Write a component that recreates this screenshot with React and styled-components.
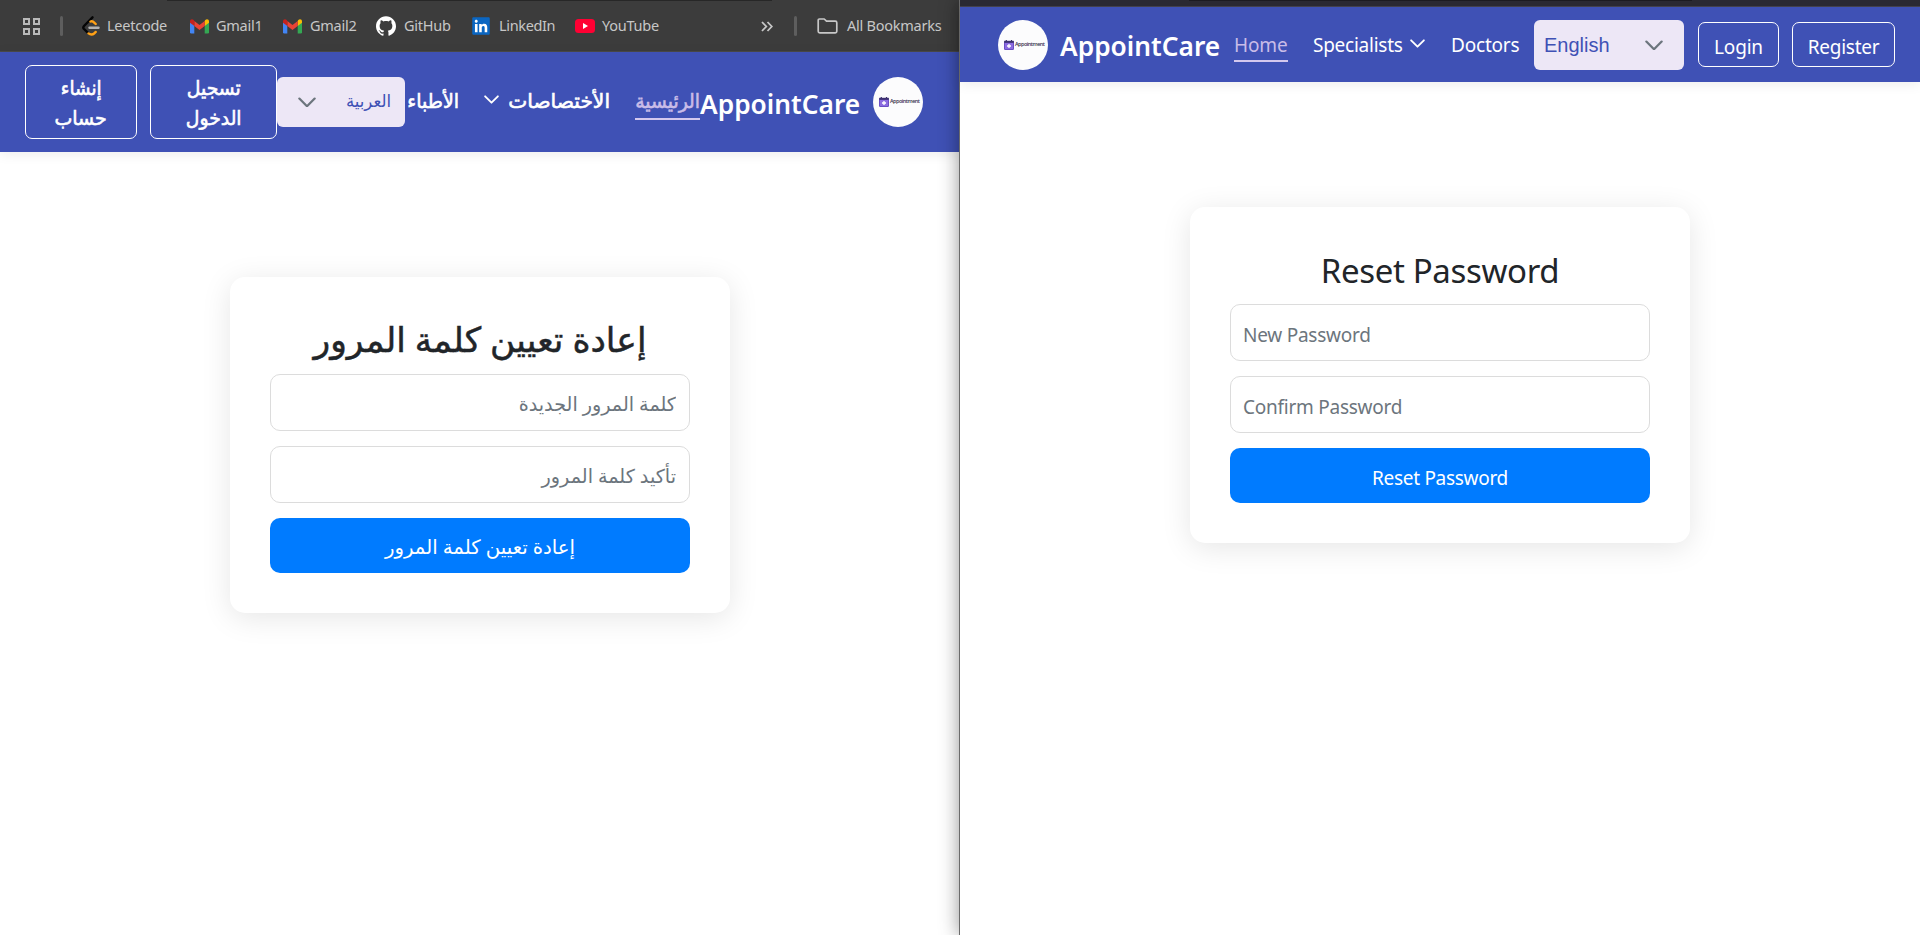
import React from 'react';
import styled, { createGlobalStyle } from 'styled-components';
import { SiGithub } from 'react-icons/si';
import { FaLinkedin } from 'react-icons/fa';

const ui = '"Noto Sans", "DejaVu Sans", sans-serif';

const Global = createGlobalStyle`
  *, *::before, *::after { box-sizing: border-box; }
  body { margin: 0; background: #fff; overflow: hidden; }
  button, input { font: inherit; margin: 0; }
  h1, p { margin: 0; }
`;

const Desktop = styled.div`
  display: flex;
  width: 1920px;
  height: 935px;
  font-family: ${ui};
  color: #212529;
  line-height: 1.5;
`;

const Pane = styled.section`
  display: flex;
  flex-direction: column;
  width: ${(p) => (p.$front ? 961 : 959)}px;
  height: 935px;
  background: #fff;
  flex: none;
  ${(p) => p.$front && 'box-shadow: 0 0 18px rgba(0,0,0,.42); border-left: 1px solid #6b6b6b; z-index: 1;'}
`;

const Bookmarks = styled.div`
  display: flex;
  align-items: center;
  height: 52px;
  padding: 1px 17px 0 22px;
  background: linear-gradient(#272727, #272727) 167px 0 / 605px 1px no-repeat #3c3c3c;
  border-bottom: 1px solid #4a4a4a;
  color: #c7c7c7;
  font-size: 14.5px;
`;

const Bookmark = styled.div`
  display: flex;
  align-items: center;
  gap: ${(p) => p.$gap || 8}px;
  margin-right: ${(p) => p.$after || 0}px;
  svg { flex: none; }
`;

const Label = styled.span`
  display: block;
  width: ${(p) => p.$w}px;
  white-space: nowrap;
  letter-spacing: ${(p) => p.$ls ?? -0.25}px;
`;

const Separator = styled.span`
  width: 3px;
  height: 20px;
  border-radius: 2px;
  background: #5e5e5e;
  margin: 0 ${(p) => p.$after}px 0 ${(p) => p.$before}px;
`;

const Spacer = styled.span`flex: 1;`;

const LinkedInTile = styled.span`
  display: flex;
  background: linear-gradient(#fff, #fff) center / 14px 14px no-repeat;
`;

const TopEdge = styled.div`
  height: 7px;
  flex: none;
  background: linear-gradient(#1d1c22, #1d1c22) 229px 0 / 503px 1px no-repeat #2b2a33;
  border-bottom: 1px solid #45434f;
`;

const Nav = styled.nav`
  display: flex;
  align-items: ${(p) => (p.$rtl ? 'center' : 'flex-start')};
  flex: none;
  height: ${(p) => (p.$rtl ? 100 : 75)}px;
  padding: ${(p) => (p.$rtl ? '0 36px 0 25px' : '13px 25px 0 38px')};
  background: #3f51b5;
  color: #fff;
  box-shadow: 0 2px 12px rgba(0, 0, 0, .08);
  font-size: 19px;
`;

const Logo = styled.div`
  width: 50px;
  height: 50px;
  border-radius: 50%;
  background: #fcfcfd;
  display: flex;
  align-items: center;
  padding-left: 6px;
  gap: 1px;
  flex: none;
  color: #34324c;
  font: 600 5.4px/1 "Open Sans", sans-serif;
`;

const Brand = styled.div`
  flex: none;
  font-size: 26.3px;
  font-weight: 600;
  line-height: 40px;
  width: 160px;
  white-space: nowrap;
  margin: ${(p) => p.$m};
`;

const NavLink = styled.a`
  display: flex;
  align-items: center;
  gap: ${(p) => p.$gap || 8}px;
  flex: none;
  height: 36px;
  width: ${(p) => p.$w}px;
  margin: ${(p) => p.$m};
  padding-top: ${(p) => p.$pt || 0}px;
  white-space: nowrap;
  letter-spacing: ${(p) => p.$ls || 0}px;
  color: ${(p) => (p.$active ? '#c9bce8' : '#fff')};
  border-bottom: 2px solid ${(p) => (p.$active ? '#d4c8ee' : 'transparent')};
  svg { flex: none; margin-bottom: 3px; }
`;

const ArabicText = styled.span`
  display: block;
  flex: none;
  width: ${(p) => p.$w}px;
  white-space: nowrap;
  font-size: ${(p) => p.$size || 20}px;
  transform: scaleX(${(p) => p.$x || 1});
  transform-origin: ${(p) => (p.$center ? 'center' : 'right')};
  -webkit-text-stroke: ${(p) => p.$stroke ?? 0.6}px currentColor;
`;

const Select = styled.div`
  display: flex;
  align-items: center;
  justify-content: space-between;
  flex: none;
  width: ${(p) => p.$w}px;
  height: 50px;
  padding: ${(p) => p.$pad};
  border-radius: 6px;
  background: #ede7f6;
  color: #3f51b5;
  font-family: "Liberation Sans", "DejaVu Sans", sans-serif;
  font-size: 20px;
  margin: ${(p) => p.$m};
`;

const OutlineButton = styled.button`
  display: flex;
  flex-direction: column;
  align-items: center;
  justify-content: center;
  flex: none;
  width: ${(p) => p.$w}px;
  height: ${(p) => p.$h || 45}px;
  padding: ${(p) => p.$pad || '4px 0 0'};
  border: 1px solid #fff;
  border-radius: 7px;
  background: transparent;
  color: #fff;
  line-height: 30px;
  letter-spacing: ${(p) => p.$ls || 0}px;
  margin: ${(p) => p.$m};
`;

const Card = styled.form`
  display: flex;
  flex-direction: column;
  flex: none;
  width: 500px;
  height: 336px;
  margin: 125px 0 0 230px;
  padding: 39px 40px 0;
  border-radius: 15px;
  background: #fff;
  box-shadow: 0 5px 30px rgba(0, 0, 0, .1);
`;

const Title = styled.h1`
  height: 58px;
  line-height: ${(p) => p.$lh || 48}px;
  text-align: center;
  font-size: ${(p) => p.$size}px;
  font-weight: 400;
  letter-spacing: ${(p) => p.$ls || 0}px;
  -webkit-text-stroke: ${(p) => p.$stroke || 0}px currentColor;
`;

const Field = styled.input`
  height: 57px;
  width: 420px;
  margin-bottom: 15px;
  padding: ${(p) => p.$pad || '2px 13px 0'};
  border: 1px solid #dcdcdc;
  border-radius: 10px;
  font-size: ${(p) => p.$size}px;
  letter-spacing: ${(p) => p.$ls || 0}px;
  background: #fff;
  &::placeholder { color: #6c757d; opacity: 1; }
`;

const Submit = styled.button`
  height: 55px;
  border: 0;
  border-radius: 10px;
  background: #007bff;
  color: #fff;
  font-size: ${(p) => p.$size}px;
  letter-spacing: ${(p) => p.$ls || 0}px;
  padding: ${(p) => p.$pad || '2px 0 0'};
`;

const Chevron = ({ w = 15, color = '#fff', sw = 2 }) => (
  <svg width={w} height={w * 0.6} viewBox="0 0 16 9.6" fill="none" stroke={color} strokeWidth={sw} strokeLinecap="round" strokeLinejoin="round">
    <path d="M1.2 1.4 8 8.2l6.8-6.8" />
  </svg>
);

const CalendarMark = () => (
  <svg width="10" height="10" viewBox="0 0 10 10">
    <rect x="0" y="1" width="10" height="9" rx="1.2" fill="#6a4fc4" />
    <rect x=".2" y=".8" width="9.6" height="2" fill="#3d3270" />
    <path d="M2.3 0v2M7.5 0v2" stroke="#3d3270" strokeWidth="1.2" />
    <rect x="1" y="3" width="8" height="6" fill="#8b6be0" />
    <path d="M5 4v4M3 6h4" stroke="#fff" strokeWidth="1.3" />
  </svg>
);

const AppLogo = () => <Logo dir="ltr"><CalendarMark /><Label $w={28} $ls={-0.45}>Appointment</Label></Logo>;

const Apps = () => (
  <svg width="20" height="19" viewBox="0 0 20 19" fill="none" stroke="#b9b9b9" strokeWidth="2">
    <path d="M2 2h5v5H2zM12 2h5v5h-5zM2 12h5v5H2zM12 12h5v5h-5z" />
  </svg>
);

const Leet = () => (
  <svg width="18" height="20" viewBox="0 0 18 20" fill="none" strokeWidth="2.4" strokeLinecap="round" strokeLinejoin="round">
    <path d="M5.5 16.4 2 13q-1.4-1.5 0-3L10.5 1.3" stroke="#050505" />
    <path d="M8.5 5.5q2-.8 4 1.3l1.2 1.2M6.5 17.4q3 2.2 6-.2l1.2-1.300" stroke="#ffa116" />
    <path d="M7.5 11.8h9" stroke="#b3b3b3" />
  </svg>
);

const Gmail = () => (
  <svg width="19" height="15" viewBox="0 0 19 15">
    <path d="M0 2.5v10.800Q0 14.500 1.300 14.500H4.300V6z" fill="#4285f4" />
    <path d="M14.700 6v8.500h3Q19 14.500 19 13.300V2.500z" fill="#34a853" />
    <path d="M14.700 2v5L19 3.800V2.300C19 .2 16.800-.3 15.300.9z" fill="#fbbc04" />
    <path d="M4.300 7V2l5.200 3.900L14.700 2v5L9.500 11z" fill="#ea4335" />
    <path d="M0 2.300v1.500L4.300 7V2L3.700.9C2.200-.3 0 .2 0 2.300" fill="#c5221f" />
  </svg>
);

const YouTube = () => (
  <svg width="20" height="14" viewBox="0 0 20 14"><rect width="20" height="14" rx="3.5" fill="#ff0033" /><path d="m8 4 5 3-5 3z" fill="#fff" /></svg>
);

const More = () => (
  <svg width="12" height="11" viewBox="0 0 12 11" fill="none" stroke="#c7c7c7" strokeWidth="1.8"><path d="m1 1 4.300 4.500L1 10M6.500 1l4.300 4.500L6.500 10" /></svg>
);

const Folder = () => (
  <svg width="21" height="16" viewBox="0 0 21 16" fill="none" stroke="#c7c7c7" strokeWidth="1.7" strokeLinejoin="round"><path d="M1.200 2.200q0-1.200 1.200-1.200h4.800l2.300 2.200h8.800q1.500 0 1.500 1.500v8.600q0 1.500-1.500 1.500H2.700q-1.500 0-1.500-1.500z" /></svg>
);

const ArabicWindow = () => (
  <Pane>
    <Bookmarks>
      <Apps />
      <Separator $before={18} $after={19} />
      <Bookmark $after={22} $gap={7}><Leet /><Label $w={61}>Leetcode</Label></Bookmark>
      <Bookmark $after={21} $gap={7}><Gmail /><Label $w={46}>Gmail1</Label></Bookmark>
      <Bookmark $after={20}><Gmail /><Label $w={46}>Gmail2</Label></Bookmark>
      <Bookmark $after={20}><SiGithub size={20} color="#fff" /><Label $w={47}>GitHub</Label></Bookmark>
      <Bookmark $after={21}><LinkedInTile><FaLinkedin size={20} color="#0a66c2" /></LinkedInTile><Label $w={55} $ls={-0.35}>LinkedIn</Label></Bookmark>
      <Bookmark $gap={7}><YouTube /><Label $w={57}>YouTube</Label></Bookmark>
      <Spacer />
      <More />
      <Separator $before={21} $after={20} />
      <Bookmark $gap={9}><Folder /><Label $w={95} $ls={-0.25}>All Bookmarks</Label></Bookmark>
    </Bookmarks>
    <Nav $rtl dir="rtl">
      <AppLogo />
      <Brand $m="3px 13px 0 0" dir="ltr">AppointCare</Brand>
      <NavLink $active $w={65} $m="0"><ArabicText $w={65} $x={0.94}>الرئيسية</ArabicText></NavLink>
      <NavLink $w={126} $m="0 25px 0 0"><ArabicText $w={103} $x={1.01}>الأختصاصات</ArabicText><Chevron /></NavLink>
      <NavLink $w={54} $m="0 25px 0 0"><ArabicText $w={54} $x={0.95}>الأطباء</ArabicText></NavLink>
      <Select $w={128} $pad="0 14px 0 21px"><ArabicText $w={46} $size={17} $x={0.97} $stroke={0}>العربية</ArabicText><Chevron w={18} color="#6c757d" /></Select>
      <OutlineButton $w={127} $h={74} $pad="1px 0 0">
        <ArabicText $x={0.94} $center>تسجيل</ArabicText>
        <ArabicText $x={0.94} $center>الدخول</ArabicText>
      </OutlineButton>
      <OutlineButton $w={112} $h={74} $pad="1px 0 0" $m="0 13px 0 0">
        <ArabicText $x={0.92} $center>إنشاء</ArabicText>
        <ArabicText $x={0.95} $center>حساب</ArabicText>
      </OutlineButton>
    </Nav>
    <Card dir="rtl">
      <Title $size={34.5} $lh={46} $stroke={0.5}>إعادة تعيين كلمة المرور</Title>
      <Field placeholder="كلمة المرور الجديدة" $size={19.2} />
      <Field placeholder="تأكيد كلمة المرور" $size={19.2} />
      <Submit type="button" $size={19.7}>إعادة تعيين كلمة المرور</Submit>
    </Card>
  </Pane>
);

const EnglishWindow = () => (
  <Pane $front>
    <TopEdge />
    <Nav>
      <AppLogo />
      <Brand $m="6px 0 0 12px">AppointCare</Brand>
      <NavLink $active $w={54} $m="6px 0 0 14px" $pt={4} $ls={-0.1}>Home</NavLink>
      <NavLink $w={113} $m="6px 0 0 25px" $gap={7} $pt={4} $ls={-0.25}>Specialists <Chevron /></NavLink>
      <NavLink $w={69} $m="6px 0 0 25px" $pt={4} $ls={-0.2}>Doctors</NavLink>
      <Select $w={150} $m="0 0 0 14px" $pad="0 21px 0 10px">English<Chevron w={18} color="#6c757d" /></Select>
      <OutlineButton $w={81} $m="2px 0 0 14px" $ls={-0.2}>Login</OutlineButton>
      <OutlineButton $w={103} $m="2px 0 0 13px" $ls={-0.25}>Register</OutlineButton>
    </Nav>
    <Card>
      <Title $size={33} $ls={-0.35} $lh={50}>Reset Password</Title>
      <Field placeholder="New Password" $size={19} $ls={-0.25} $pad="4px 13px 0 12px" />
      <Field placeholder="Confirm Password" $size={19} $ls={-0.25} $pad="4px 13px 0 12px" />
      <Submit type="button" $size={19} $ls={-0.3} $pad="5px 0 0">Reset Password</Submit>
    </Card>
  </Pane>
);

export default function App() {
  return (
    <Desktop>
      <Global />
      <ArabicWindow />
      <EnglishWindow />
    </Desktop>
  );
}
